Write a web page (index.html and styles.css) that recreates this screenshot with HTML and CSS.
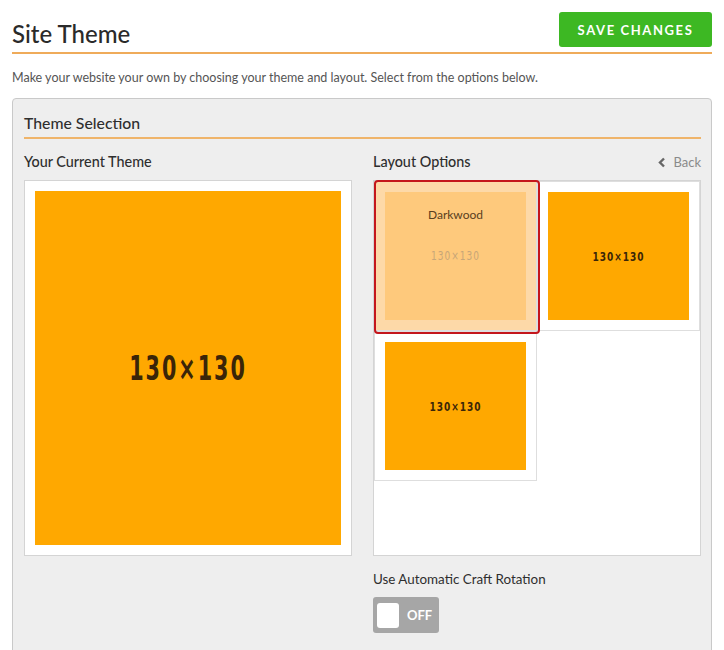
FILE: index.html
```html
<!DOCTYPE html>
<html lang="en">
<head>
  <meta charset="UTF-8">
  <meta name="viewport" content="width=device-width, initial-scale=1">
  <title>Site Theme</title>
  <link rel="stylesheet" href="styles.css">
</head>
<body>
  <div class="page">
    <header class="page-head">
      <h1>Site Theme</h1>
      <button class="btn-save">SAVE CHANGES</button>
    </header>
    <p class="intro">Make your website your own by choosing your theme and layout. Select from the options below.</p>

    <section class="panel">
      <h2>Theme Selection</h2>
      <div class="cols">
        <!-- tema actual -->
        <div class="col">
          <h3>Your Current Theme</h3>
          <div class="current">
            <div class="thumb thumb-lg"><span class="size">130×130</span></div>
          </div>
        </div>

        <!-- opciones -->
        <div class="col">
          <div class="col-head">
            <h3>Layout Options</h3>
            <a href="#" class="back"><svg width="9" height="11" viewBox="0 0 9 11"><path d="M7 1.5 L3 5.5 L7 9.5" fill="none" stroke="#666" stroke-width="2.4"/></svg>Back</a>
          </div>
          <div class="layouts">
            <div class="layout selected">
              <div class="thumb">
                <span class="name">Darkwood</span>
                <span class="size">130×130</span>
              </div>
            </div>
            <div class="layout">
              <div class="thumb"><span class="size">130×130</span></div>
            </div>
            <div class="layout">
              <div class="thumb"><span class="size">130×130</span></div>
            </div>
          </div>
          <p class="rotation-label">Use Automatic Craft Rotation</p>
          <div class="toggle"><span class="knob"></span><span class="toggle-text">OFF</span></div>
        </div>
      </div>
    </section>
  </div>
</body>
</html>
```

FILE: styles.css
```css
body {
  margin: 0;
  background: #fff;
  font-family: Lato, "Open Sans", Arial, sans-serif;
  color: #2b2b2b;
}
.page {
  padding: 0 12px;
}
.page-head {
  display: flex;
  justify-content: space-between;
  align-items: flex-start;
  padding: 12px 0 3px;
  border-bottom: 2px solid #efab5a;
}
h1 {
  margin: 7px 0 0;
  font-size: 24px;
  line-height: 30px;
  font-weight: 500;
  color: #2a2a2a;
}
.btn-save {
  width: 153px;
  height: 35px;
  background: #3db823;
  color: #fff;
  border: none;
  border-radius: 3px;
  font-family: Lato, Arial, sans-serif;
  font-weight: 700;
  font-size: 13px;
  letter-spacing: 1.6px;
  cursor: pointer;
}
.intro {
  margin: 16px 0 12px;
  font-size: 12.5px;
  line-height: 16px;
  color: #555;
}
.panel {
  background: #eeeeee;
  border: 1px solid #c9c9c9;
  border-radius: 4px;
  padding: 14px 10px 40px 11px;
}
h2 {
  margin: 0;
  padding-bottom: 4px;
  font-size: 15.8px;
  line-height: 20px;
  font-weight: 500;
  color: #2e2e2e;
  border-bottom: 2px solid #efb46a;
}
.cols {
  display: flex;
  gap: 21px;
  margin-top: 14px;
}
.col {
  width: 328px;
}
h3 {
  margin: 0 0 9px;
  font-size: 14.4px;
  line-height: 18px;
  font-weight: 500;
  color: #2e2e2e;
}
.col-head {
  display: flex;
  justify-content: space-between;
  align-items: flex-start;
}
.back {
  font-size: 13px;
  line-height: 18px;
  color: #8a8a8a;
  text-decoration: none;
  display: flex;
  align-items: center;
  gap: 7px;
}
.current {
  background: #fff;
  border: 1px solid #d4d4d4;
  padding: 10px;
}
.thumb {
  background: #ffa800;
  width: 141px;
  height: 128px;
  display: flex;
  flex-direction: column;
  align-items: center;
  justify-content: center;
}
.thumb-lg {
  width: 306px;
  height: 354px;
}
.size {
  font-family: "DejaVu Sans Condensed", "Liberation Sans Narrow", sans-serif;
  font-weight: 700;
  font-size: 10px;
  letter-spacing: 1px;
  color: #3a2508;
  transform: scaleY(1.25);
}
.thumb-lg .size {
  font-size: 23px;
  letter-spacing: 2px;
  transform: scaleY(1.45);
}
.layouts {
  background: #fff;
  border: 1px solid #d4d4d4;
  height: 374px;
  display: flex;
  flex-wrap: wrap;
  align-content: flex-start;
}
.layout {
  width: 163px;
  height: 150px;
  box-sizing: border-box;
  border: 1px solid #dedede;
  display: flex;
  align-items: center;
  justify-content: center;
}
.selected {
  position: relative;
  background: #fdd9a8;
}
.selected::after {
  content: "";
  position: absolute;
  top: -2px;
  left: -1px;
  right: -4px;
  bottom: -4px;
  border: 2px solid #c4161c;
  border-radius: 4px;
}
.selected .thumb {
  background: #fec97c;
  justify-content: flex-start;
  padding-top: 15px;
  box-sizing: border-box;
}
.selected .name {
  font-size: 12px;
  color: #5a4020;
  margin-bottom: 28px;
}
.selected .size {
  color: #c7a678;
  font-weight: 400;
}
.rotation-label {
  margin: 15px 0 10px;
  font-size: 13.4px;
  line-height: 16px;
  color: #2e2e2e;
}
.toggle {
  width: 66px;
  height: 36px;
  background: #a6a6a6;
  border-radius: 3px;
  display: flex;
  align-items: center;
  padding: 0 4px;
  box-sizing: border-box;
  gap: 8px;
}
.knob {
  width: 22px;
  height: 25px;
  background: #fff;
  border-radius: 3px;
}
.toggle-text {
  color: #fff;
  font-weight: 700;
  font-size: 13px;
}
```
